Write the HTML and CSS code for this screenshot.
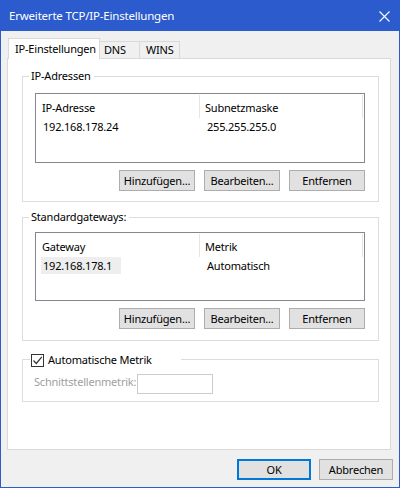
FILE: index.html
```html
<!DOCTYPE html>
<html lang="de">
<head>
<meta charset="utf-8">
<title>Erweiterte TCP/IP-Einstellungen</title>
<link rel="stylesheet" href="styles.css">
</head>
<body>
<div class="window">
  <div class="titlebar">
    <span class="title">Erweiterte TCP/IP-Einstellungen</span>
    <svg class="close" width="11" height="11" viewBox="0 0 11 11"><path d="M0.5 0.5 L10.5 10.5 M10.5 0.5 L0.5 10.5" stroke="#ffffff" stroke-width="1.1" fill="none"/></svg>
  </div>
  <div class="body">
    <div class="tabs">
      <div class="tab active">IP-Einstellungen</div>
      <div class="tab dns">DNS</div>
      <div class="tab wins">WINS</div>
    </div>
    <div class="panel">
      <div class="group g-ip">
        <span class="group-title">IP-Adressen</span>
        <div class="listbox">
          <div class="lv-head">
            <div class="hcol c1">IP-Adresse</div>
            <div class="hcol c2">Subnetzmaske</div>
          </div>
          <div class="lv-row">
            <div class="cell c1"><span class="cell-text">192.168.178.24</span></div>
            <div class="cell c2"><span class="cell-text">255.255.255.0</span></div>
          </div>
        </div>
        <div class="btnrow">
          <button class="btn">Hinzufügen...</button>
          <button class="btn">Bearbeiten...</button>
          <button class="btn">Entfernen</button>
        </div>
      </div>
      <div class="group g-gw">
        <span class="group-title">Standardgateways:</span>
        <div class="listbox lb-gw">
          <div class="lv-head">
            <div class="hcol c1">Gateway</div>
            <div class="hcol c2">Metrik</div>
          </div>
          <div class="lv-row">
            <div class="cell c1"><span class="cell-text focus">192.168.178.1</span></div>
            <div class="cell c2"><span class="cell-text">Automatisch</span></div>
          </div>
        </div>
        <div class="btnrow">
          <button class="btn">Hinzufügen...</button>
          <button class="btn">Bearbeiten...</button>
          <button class="btn">Entfernen</button>
        </div>
      </div>
      <div class="group g-metric">
        <label class="group-title check-title">
          <span class="checkbox"><svg width="11" height="11" viewBox="0 0 11 11"><path d="M1.5 5.5 L4.3 8.5 L9.8 1.8" stroke="#333333" stroke-width="1.2" fill="none"/></svg></span>
          <span>Automatische Metrik</span>
        </label>
        <div class="metric-row">
          <span class="disabled-label">Schnittstellenmetrik:</span>
          <span class="textbox"></span>
        </div>
      </div>
    </div>
    <div class="footer">
      <button class="btn dlg default">OK</button>
      <button class="btn dlg">Abbrechen</button>
    </div>
  </div>
</div>
</body>
</html>
```
FILE: styles.css
```css
html, body {
  margin: 0;
  padding: 0;
}
body {
  width: 400px;
  height: 488px;
  font-family: "Noto Sans", "Open Sans", sans-serif;
  font-size: 11px;
  letter-spacing: -0.2px;
  color: #000000;
}
.window {
  box-sizing: border-box;
  width: 400px;
  height: 488px;
  border: 1px solid #2b5bcc;
  background: #f0f0f0;
  display: flex;
  flex-direction: column;
}
.titlebar {
  height: 30px;
  background: #2b5bcc;
  color: #ffffff;
  display: flex;
  align-items: center;
  justify-content: space-between;
  padding: 0 9px 0 8px;
  font-size: 11.5px;
}
.title {
  line-height: 16px;
}
.close {
  display: block;
  margin-top: 1px;
}
.body {
  padding: 7px 8px 0 6px;
}
.tabs {
  display: flex;
  align-items: flex-end;
  height: 20px;
}
.tab {
  box-sizing: border-box;
  border: 1px solid #d9d9d9;
  border-bottom: none;
  background: #f0f0f0;
  height: 17px;
  line-height: 16px;
  width: 41px;
  white-space: nowrap;
}
.tab.active {
  position: relative;
  z-index: 1;
  background: #ffffff;
  width: 92px;
  height: 21px;
  margin-left: 1px;
  margin-bottom: -1px;
  line-height: 19px;
  padding-left: 6px;
}
.tab.dns {
  margin-left: -1px;
  padding-left: 4px;
}
.tab.wins {
  margin-left: -1px;
  padding-left: 6px;
}
.panel {
  box-sizing: border-box;
  height: 392px;
  border: 1px solid #d9d9d9;
  background: #ffffff;
  padding: 17px 11px 0 14px;
}
.group {
  position: relative;
  border: 1px solid #dcdcdc;
}
.group-title {
  position: absolute;
  top: -9px;
  left: 6px;
  line-height: 16px;
  background: #ffffff;
  padding: 0 3px 0 2px;
  white-space: nowrap;
}
.g-ip {
  padding: 16px 13px 10px 12px;
}
.g-gw {
  margin-top: 15px;
  padding: 14px 13px 11px 12px;
}
.g-metric {
  margin-top: 18px;
  padding: 14px 13px 7px 11px;
}
.listbox {
  box-sizing: border-box;
  height: 70px;
  border: 1px solid #828790;
  background: #ffffff;
}
.listbox.lb-gw {
  height: 69px;
}
.lv-head {
  display: flex;
  height: 24px;
}
.hcol {
  box-sizing: border-box;
  padding-top: 5px;
  line-height: 16px;
  border-right: 1px solid #e5e5e5;
  margin-top: 1px;
  height: 23px;
  white-space: nowrap;
}
.hcol.c1 {
  width: 164px;
  padding-left: 6px;
}
.hcol.c2 {
  width: 163px;
  padding-left: 5px;
}
.lv-row {
  display: flex;
  height: 17px;
}
.cell {
  line-height: 17px;
  white-space: nowrap;
}
.cell.c1 {
  width: 164px;
  padding-left: 5px;
  box-sizing: border-box;
}
.cell.c2 {
  padding-left: 5px;
}
.cell-text {
  display: inline-block;
  padding-left: 2px;
}
.cell-text.focus {
  background: #eeeeee;
  width: 78px;
}
.btnrow {
  display: flex;
  justify-content: flex-end;
  gap: 9px;
  margin-top: 7px;
}
.btn {
  box-sizing: border-box;
  width: 76px;
  height: 21px;
  margin: 0;
  padding: 0;
  border: 1px solid #adadad;
  background: #e1e1e1;
  font-family: inherit;
  font-size: 11px;
  letter-spacing: -0.2px;
  color: #000000;
  line-height: 18px;
  text-align: center;
}
.check-title {
  left: 7px;
  top: -8px;
  width: 151px;
  padding: 0;
  display: flex;
  align-items: center;
  gap: 4px;
}
.checkbox {
  box-sizing: border-box;
  width: 13px;
  height: 13px;
  border: 1px solid #333333;
  background: #ffffff;
  display: flex;
  align-items: center;
  justify-content: center;
  margin-left: 1px;
}
.checkbox svg {
  display: block;
}
.metric-row {
  display: flex;
  align-items: center;
  height: 20px;
}
.disabled-label {
  flex: none;
  color: #a0a0a0;
  line-height: 16px;
  padding-bottom: 4px;
  margin-right: 1px;
  white-space: nowrap;
}
.textbox {
  box-sizing: border-box;
  width: 76px;
  height: 20px;
  border: 1px solid #cccccc;
  background: #ffffff;
}
.footer {
  display: flex;
  justify-content: flex-end;
  gap: 8px;
  margin-top: 9px;
  margin-right: -2px;
}
.btn.dlg {
  width: 74px;
}
.btn.default {
  border: 2px solid #0078d7;
  line-height: 16px;
}
```
